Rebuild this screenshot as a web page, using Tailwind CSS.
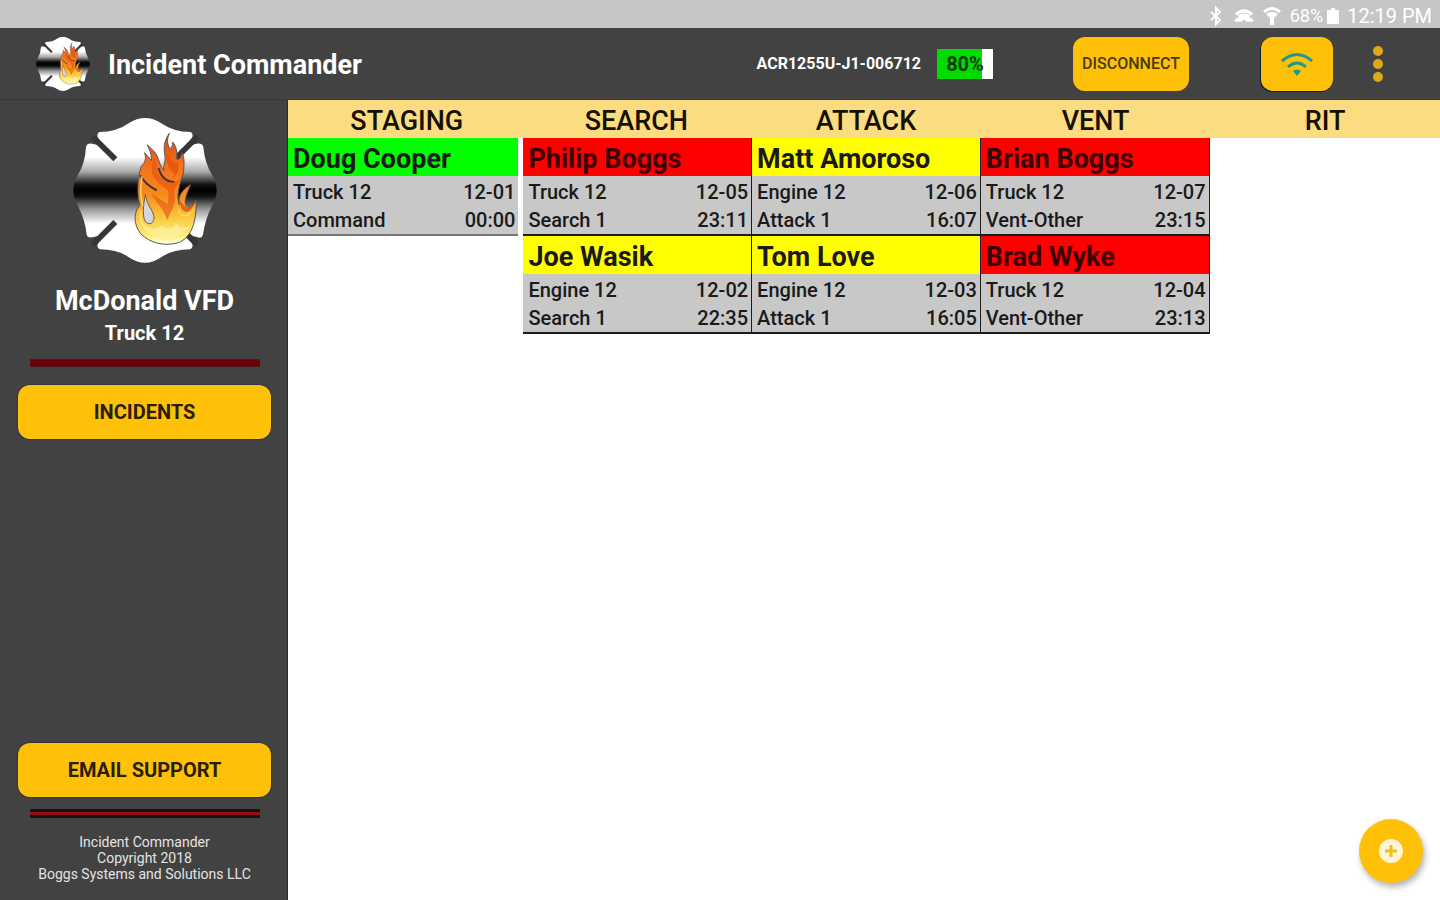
<!DOCTYPE html>
<html lang="en">
<head>
  <meta charset="UTF-8">
  <meta name="viewport" content="width=device-width, initial-scale=1.0">
  <title>Incident Commander</title>
  <script src="https://cdn.jsdelivr.net/npm/@tailwindcss/browser@4"></script>
</head>
<body class="min-h-screen flex flex-col bg-white text-black font-['Roboto',sans-serif]">

  <!-- Shared logo -->
  <svg class="absolute w-0 h-0" aria-hidden="true">
    <defs>
      <linearGradient id="steel" gradientUnits="userSpaceOnUse" x1="0" y1="38" x2="0" y2="473">
        <stop offset="0.27" stop-color="#fff" />
        <stop offset="0.37" stop-color="#aaa" />
        <stop offset="0.46" stop-color="#111" />
        <stop offset="0.5" stop-color="#000" />
        <stop offset="0.54" stop-color="#111" />
        <stop offset="0.63" stop-color="#999" />
        <stop offset="0.73" stop-color="#fff" />
      </linearGradient>
      <linearGradient id="fire" gradientUnits="userSpaceOnUse" x1="0" y1="80" x2="0" y2="420">
        <stop offset="0" stop-color="#d9481c" />
        <stop offset="0.3" stop-color="#f4701c" />
        <stop offset="0.55" stop-color="#f78a1c" />
        <stop offset="0.75" stop-color="#fbc63c" />
        <stop offset="0.92" stop-color="#fdf07c" />
        <stop offset="1" stop-color="#fff" />
      </linearGradient>
      <symbol id="logo" viewBox="69 38 432 435">
        <path fill="url(#steel)" d="M148 80 Q200 80 236 54 Q285 22 334 54 Q370 80 422 80 Q430 84 427 96 L410 122 L440 115 Q456 112 460 124 Q464 172 486 208 Q514 256 486 302 Q464 345 459 388 Q455 400 444 396 L414 388 L427 416 Q430 428 420 432 Q370 432 336 454 Q285 490 234 454 Q200 432 150 432 Q140 428 143 416 L158 390 L126 396 Q112 398 110 388 Q106 345 84 302 Q56 256 84 208 Q106 172 108 124 Q112 112 126 115 L158 122 L143 96 Q140 84 148 80 Z" />
        <path fill="none" stroke="#363636" stroke-width="17" d="M128 94 L196 162 M442 94 L376 160 M128 418 L196 350 M442 418 L376 352" />
        <path fill="url(#fire)" stroke="#5b5650" stroke-width="3" stroke-linejoin="round" d="M268 205 C262 240 262 275 270 300 C250 320 250 358 272 385 C300 414 345 424 385 412 C425 396 440 350 438 285 C428 302 424 312 408 300 C402 288 408 268 422 238 C398 252 382 272 388 298 C378 275 388 235 400 205 C402 180 405 160 396 142 C392 160 386 165 380 160 C382 142 380 125 368 110 C368 122 364 132 358 128 C350 112 352 98 358 84 C342 106 340 130 345 152 C348 170 338 180 342 195 C326 180 328 155 312 138 C304 132 300 126 292 118 C298 134 306 145 304 165 C298 158 292 152 284 142 C290 162 284 175 274 182 Z" />
        <path fill="#d8d6dc" stroke="#6a6056" stroke-width="3" d="M286 268 C280 300 276 335 287 350 C298 362 314 352 312 334 C308 312 290 300 286 268 Z" />
        <path fill="none" stroke="#3d3a38" stroke-width="6" stroke-linecap="round" d="M272 212 C284 232 298 244 318 254 M326 190 C334 216 350 230 372 230" />
        <path fill="#e8500f" fill-opacity="0.6" d="M306 186 C302 212 322 234 348 250 C362 262 352 280 354 296 C338 288 322 274 304 266 C318 290 342 312 352 345 C364 312 380 296 374 268 C368 252 384 238 390 220 C366 242 332 228 322 200 C320 180 316 168 312 156 Z" />
        <path fill="#e3520f" fill-opacity="0.8" d="M352 142 C346 164 352 186 368 200 C376 206 372 216 364 218 C384 212 388 190 384 172 C370 172 358 162 352 142 Z M390 282 C388 300 394 318 410 320 C422 318 428 308 430 300 C414 312 398 302 390 282 Z" />
        <path fill="#fdf0a0" fill-opacity="0.75" d="M274 312 C260 340 276 376 310 390 C350 404 400 396 420 358 C400 374 384 368 378 350 C372 374 350 376 336 360 C330 372 290 380 276 350 Z" />
        <path fill="none" stroke="#fddc6a" stroke-width="4" stroke-linecap="round" d="M276 214 C270 250 272 280 278 300 M386 314 C392 336 412 338 430 312" />
      </symbol>
    </defs>
  </svg>

  <!-- Status bar -->
  <div class="h-7 shrink-0 flex items-center justify-end gap-2 bg-[#c6c6c6] px-2 pt-1 text-white">
    <svg class="w-3 h-5" viewBox="0 0 12 20" fill="none" stroke="currentColor" stroke-width="2"><path d="M1 6 L10 14 L6 18 V2 L10 6 L1 14" /></svg>
    <svg class="ml-1 w-5 h-5" viewBox="0 0 24 20" fill="currentColor"><path d="M1 7 Q12 -3 23 7 L18 11 L23 14 V17 H15 L12 14 L9 17 H1 V14 L6 11 Z" /><path d="M5 9 Q12 4 19 9" fill="none" stroke="#c6c6c6" stroke-width="1" /></svg>
    <svg class="w-5 h-5" viewBox="0 0 20 20" fill="none" stroke="currentColor" stroke-width="3"><path d="M2 6 Q10 -1 18 6" /><path d="M4 8 Q10 4 16 8 L12 12 V19 H8 V12 Z" fill="currentColor" stroke="none" /></svg>
    <span class="text-lg leading-5">68%</span>
    <svg class="-ml-1 w-3 h-5" viewBox="0 0 12 20" fill="currentColor"><path d="M4 2 H8 V4 H12 V18 H0 V4 H4 Z" /></svg>
    <span class="text-xl leading-5">12:19 PM</span>
  </div>

  <!-- App bar -->
  <header class="h-[72px] shrink-0 flex items-center bg-[#424242] pl-9 pr-[57px] text-white border-b border-[#383838]">
    <svg class="w-[54px] h-14" aria-hidden="true"><use href="#logo" /></svg>
    <h1 class="ml-[18px] pt-1 text-[27px] font-bold">Incident Commander</h1>
    <div class="ml-auto flex items-center">
      <span class="text-base font-bold">ACR1255U-J1-006712</span>
      <div class="relative ml-4 w-14 h-[30px] bg-white">
        <div class="h-full bg-[#00dc00]" style="width: 80%"></div>
        <span class="absolute inset-0 flex items-center justify-center text-xl font-bold text-[#003c00]">80%</span>
      </div>
      <button type="button" class="ml-20 w-[116px] h-[54px] rounded-xl bg-[#ffc107] text-base font-medium text-[#4a3a00]">DISCONNECT</button>
      <button type="button" aria-label="Wi-Fi" class="ml-[72px] w-[72px] h-[54px] rounded-xl bg-[#ffc107] flex items-center justify-center shadow-[-1px_1px_1px_#0a1e46]">
        <svg class="w-8 h-6" viewBox="0 0 32 24" fill="none" stroke="#1f9a8c" stroke-width="3"><path d="M1 9 Q16 -4 31 9 M7 15 Q16 7 25 15" /><path d="M16 24 L12 19 Q16 16 20 19 Z" fill="#1f9a8c" stroke="none" /></svg>
      </button>
      <button type="button" aria-label="More options" class="ml-10">
        <svg class="w-[10px] h-10" viewBox="0 0 10 40" fill="#e0a818"><circle cx="5" cy="7" r="5" /><circle cx="5" cy="20" r="5" /><circle cx="5" cy="33" r="5" /></svg>
      </button>
    </div>
  </header>

  <div class="flex-1 flex">
    <!-- Sidebar -->
    <aside class="w-1/5 shrink-0 flex flex-col items-center bg-[#424242] pl-[18px] pr-4 pt-[18px] pb-[18px] text-white border-r border-[#2c2c2c]">
      <svg class="w-36 h-[145px]" role="img" aria-label="McDonald VFD logo"><use href="#logo" /></svg>
      <h2 class="mt-5 text-[27px] leading-9 font-bold">McDonald VFD</h2>
      <p class="text-xl leading-7 font-bold">Truck 12</p>
      <div class="mt-3 w-[230px] h-2 bg-[#6e0008] border-y border-[#4a1a1c]"></div>
      <button type="button" class="mt-[18px] w-full h-[54px] rounded-xl bg-[#ffc107] text-xl font-bold text-[#2a2000] shadow-[0_0_2px_#0a1e46]">INCIDENTS</button>
      <button type="button" class="mt-auto w-full h-[54px] rounded-xl bg-[#ffc107] text-xl font-bold text-[#2a2000] shadow-[0_0_2px_#0a1e46]">EMAIL SUPPORT</button>
      <div class="mt-3 w-[230px] h-[9px] bg-[#9a0c14] border-y-3 border-[#141414]"></div>
      <p class="mt-4 text-center text-sm leading-4 text-[#e4e4e4]">Incident Commander<br>Copyright 2018<br>Boggs Systems and Solutions LLC</p>
    </aside>

    <!-- Board -->
    <main class="flex-1">
      <div class="h-[38px] grid grid-cols-5 items-center bg-[#fcdc80] pl-1 pt-1 text-center text-[27px] leading-8 font-medium text-[#151000]">
        <h3>STAGING</h3>
        <h3>SEARCH</h3>
        <h3>ATTACK</h3>
        <h3>VENT</h3>
        <h3>RIT</h3>
      </div>
      <div class="flex items-start">
        <div id="staging" class="w-1/5"></div>
        <div class="w-3/5 pl-[5px] grid grid-cols-3">
          <div id="search"></div>
          <div id="attack"></div>
          <div id="vent"></div>
        </div>
      </div>
    </main>
  </div>

  <button type="button" aria-label="Add" class="fixed right-[17px] bottom-[17px] size-16 rounded-full bg-[#ffc107] flex items-center justify-center shadow-[2px_4px_6px_rgba(0,0,0,0.3)]">
    <svg class="size-6" viewBox="0 0 24 24"><circle cx="12" cy="12" r="12" fill="#fff6d8" /><path d="M12 6 V18 M6 12 H18" stroke="#f5bd1c" stroke-width="3" /></svg>
  </button>

  <script>
    const colors = {
      green: "bg-[#00ff00]",
      red: "bg-[#ff0000] text-[#3c0000]",
      yellow: "bg-[#ffff00]"
    };

    const board = {
      staging: [
        { name: "Doug Cooper", color: "green", unit: "Truck 12", id: "12-01", task: "Command", time: "00:00" }
      ],
      search: [
        { name: "Philip Boggs", color: "red", unit: "Truck 12", id: "12-05", task: "Search 1", time: "23:11" },
        { name: "Joe Wasik", color: "yellow", unit: "Engine 12", id: "12-02", task: "Search 1", time: "22:35" }
      ],
      attack: [
        { name: "Matt Amoroso", color: "yellow", unit: "Engine 12", id: "12-06", task: "Attack 1", time: "16:07" },
        { name: "Tom Love", color: "yellow", unit: "Engine 12", id: "12-03", task: "Attack 1", time: "16:05" }
      ],
      vent: [
        { name: "Brian Boggs", color: "red", unit: "Truck 12", id: "12-07", task: "Vent-Other", time: "23:15" },
        { name: "Brad Wyke", color: "red", unit: "Truck 12", id: "12-04", task: "Vent-Other", time: "23:13" }
      ]
    };

    for (const column in board) {
      const edge = column === "staging" ? "border-[#777777]" : "border-[#1c1c1c]";
      const side = column === "staging" ? "" : "border-r";
      document.getElementById(column).innerHTML = board[column].map(p => `
        <article class="border-b-2 ${side} ${edge} bg-[#c8c8c8] text-[#1a1a1a]">
          <h4 class="h-[38px] pl-[5px] pt-[3px] text-[27px] leading-9 font-bold ${colors[p.color]}">${p.name}</h4>
          <div class="pl-[5px] pr-[3px] pt-0.5 text-xl leading-7 font-medium">
            <p class="flex justify-between"><span>${p.unit}</span><span>${p.id}</span></p>
            <p class="flex justify-between"><span>${p.task}</span><span>${p.time}</span></p>
          </div>
        </article>`).join("");
    }
  </script>
</body>
</html>
